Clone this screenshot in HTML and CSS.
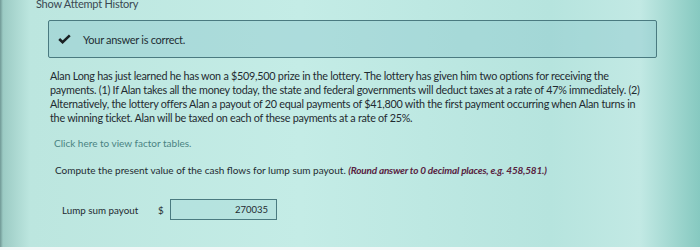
FILE: index.html
```html
<!DOCTYPE html>
<html>
<head>
<meta charset="utf-8">
<link rel="stylesheet" href="styles.css">
</head>
<body>
<div class="page">
  <div class="history">Show Attempt History</div>
  <div class="success">
    <svg class="check" width="13" height="10" viewBox="0 0 13 10"><path d="M1.2 5 L4.6 8.2 L11.8 1.4" fill="none" stroke="#1a2022" stroke-width="2.6"/></svg>
    <span>Your answer is correct.</span>
  </div>
  <p class="question">Alan Long has just learned he has won a $509,500 prize in the lottery. The lottery has given him two options for receiving the payments. (1) If Alan takes all the money today, the state and federal governments will deduct taxes at a rate of 47% immediately. (2) Alternatively, the lottery offers Alan a payout of 20 equal payments of $41,800 with the first payment occurring when Alan turns in the winning ticket. Alan will be taxed on each of these payments at a rate of 25%.</p>
  <a class="link">Click here to view factor tables.</a>
  <p class="compute">Compute the present value of the cash flows for lump sum payout. <em>(Round answer to 0 decimal places, e.g. 458,581.)</em></p>
  <div class="answer">
    <span class="label">Lump sum payout</span>
    <span class="dollar">$</span>
    <span class="input">270035</span>
  </div>
</div>
</body>
</html>
```

FILE: styles.css
```css
html, body {
  margin: 0;
  padding: 0;
  width: 700px;
  height: 250px;
  overflow: hidden;
}
body {
  font-family: Lato, "Open Sans", sans-serif;
  color: #1f2b31;
  background: linear-gradient(90deg, #6f9794 0px, #9ccbc4 3px, #bce6df 30px, #c4ece6 300px, #b6e4de 550px, #c2e9e4 640px, #86c9c0 700px);
}
.page {
  height: 247px;
  overflow: hidden;
  border-bottom: 3px solid #f4f8f8;
}
.history {
  font-size: 11px;
  letter-spacing: -0.25px;
  color: #3a4852;
  padding-left: 36px;
  margin-top: -3px;
  line-height: 14px;
}
.success {
  margin: 9px 0 0 48px;
  width: 609px;
  height: 38px;
  box-sizing: border-box;
  border: 1px solid #4a7a80;
  border-radius: 2px;
  background: rgba(130, 192, 200, 0.35);
  display: flex;
  align-items: center;
  padding-left: 9px;
  font-size: 11px;
  letter-spacing: -0.3px;
  color: #222e34;
}
.check { margin-right: 12px; }
.question {
  margin: 11px 0 0 50px;
  width: 600px;
  font-size: 10.8px;
  letter-spacing: -0.25px;
  line-height: 14px;
}
.link {
  display: block;
  margin: 12px 0 0 54px;
  font-size: 10px;
  color: #4a8382;
}
.compute {
  margin: 15px 0 0 55px;
  font-size: 10px;
}
.compute em {
  font-style: italic;
  font-weight: bold;
  letter-spacing: -0.2px;
  color: #57233f;
}
.answer {
  display: flex;
  align-items: center;
  margin: 23px 0 0 62px;
  font-size: 9.8px;
}
.label { width: 96px; }
.dollar { width: 12px; }
.input {
  width: 107px;
  height: 21px;
  box-sizing: border-box;
  border: 1px solid #4a7a80;
  background: rgba(160, 215, 215, 0.35);
  display: flex;
  align-items: center;
  justify-content: flex-end;
  padding-right: 8px;
  font-size: 9.5px;
}
```
